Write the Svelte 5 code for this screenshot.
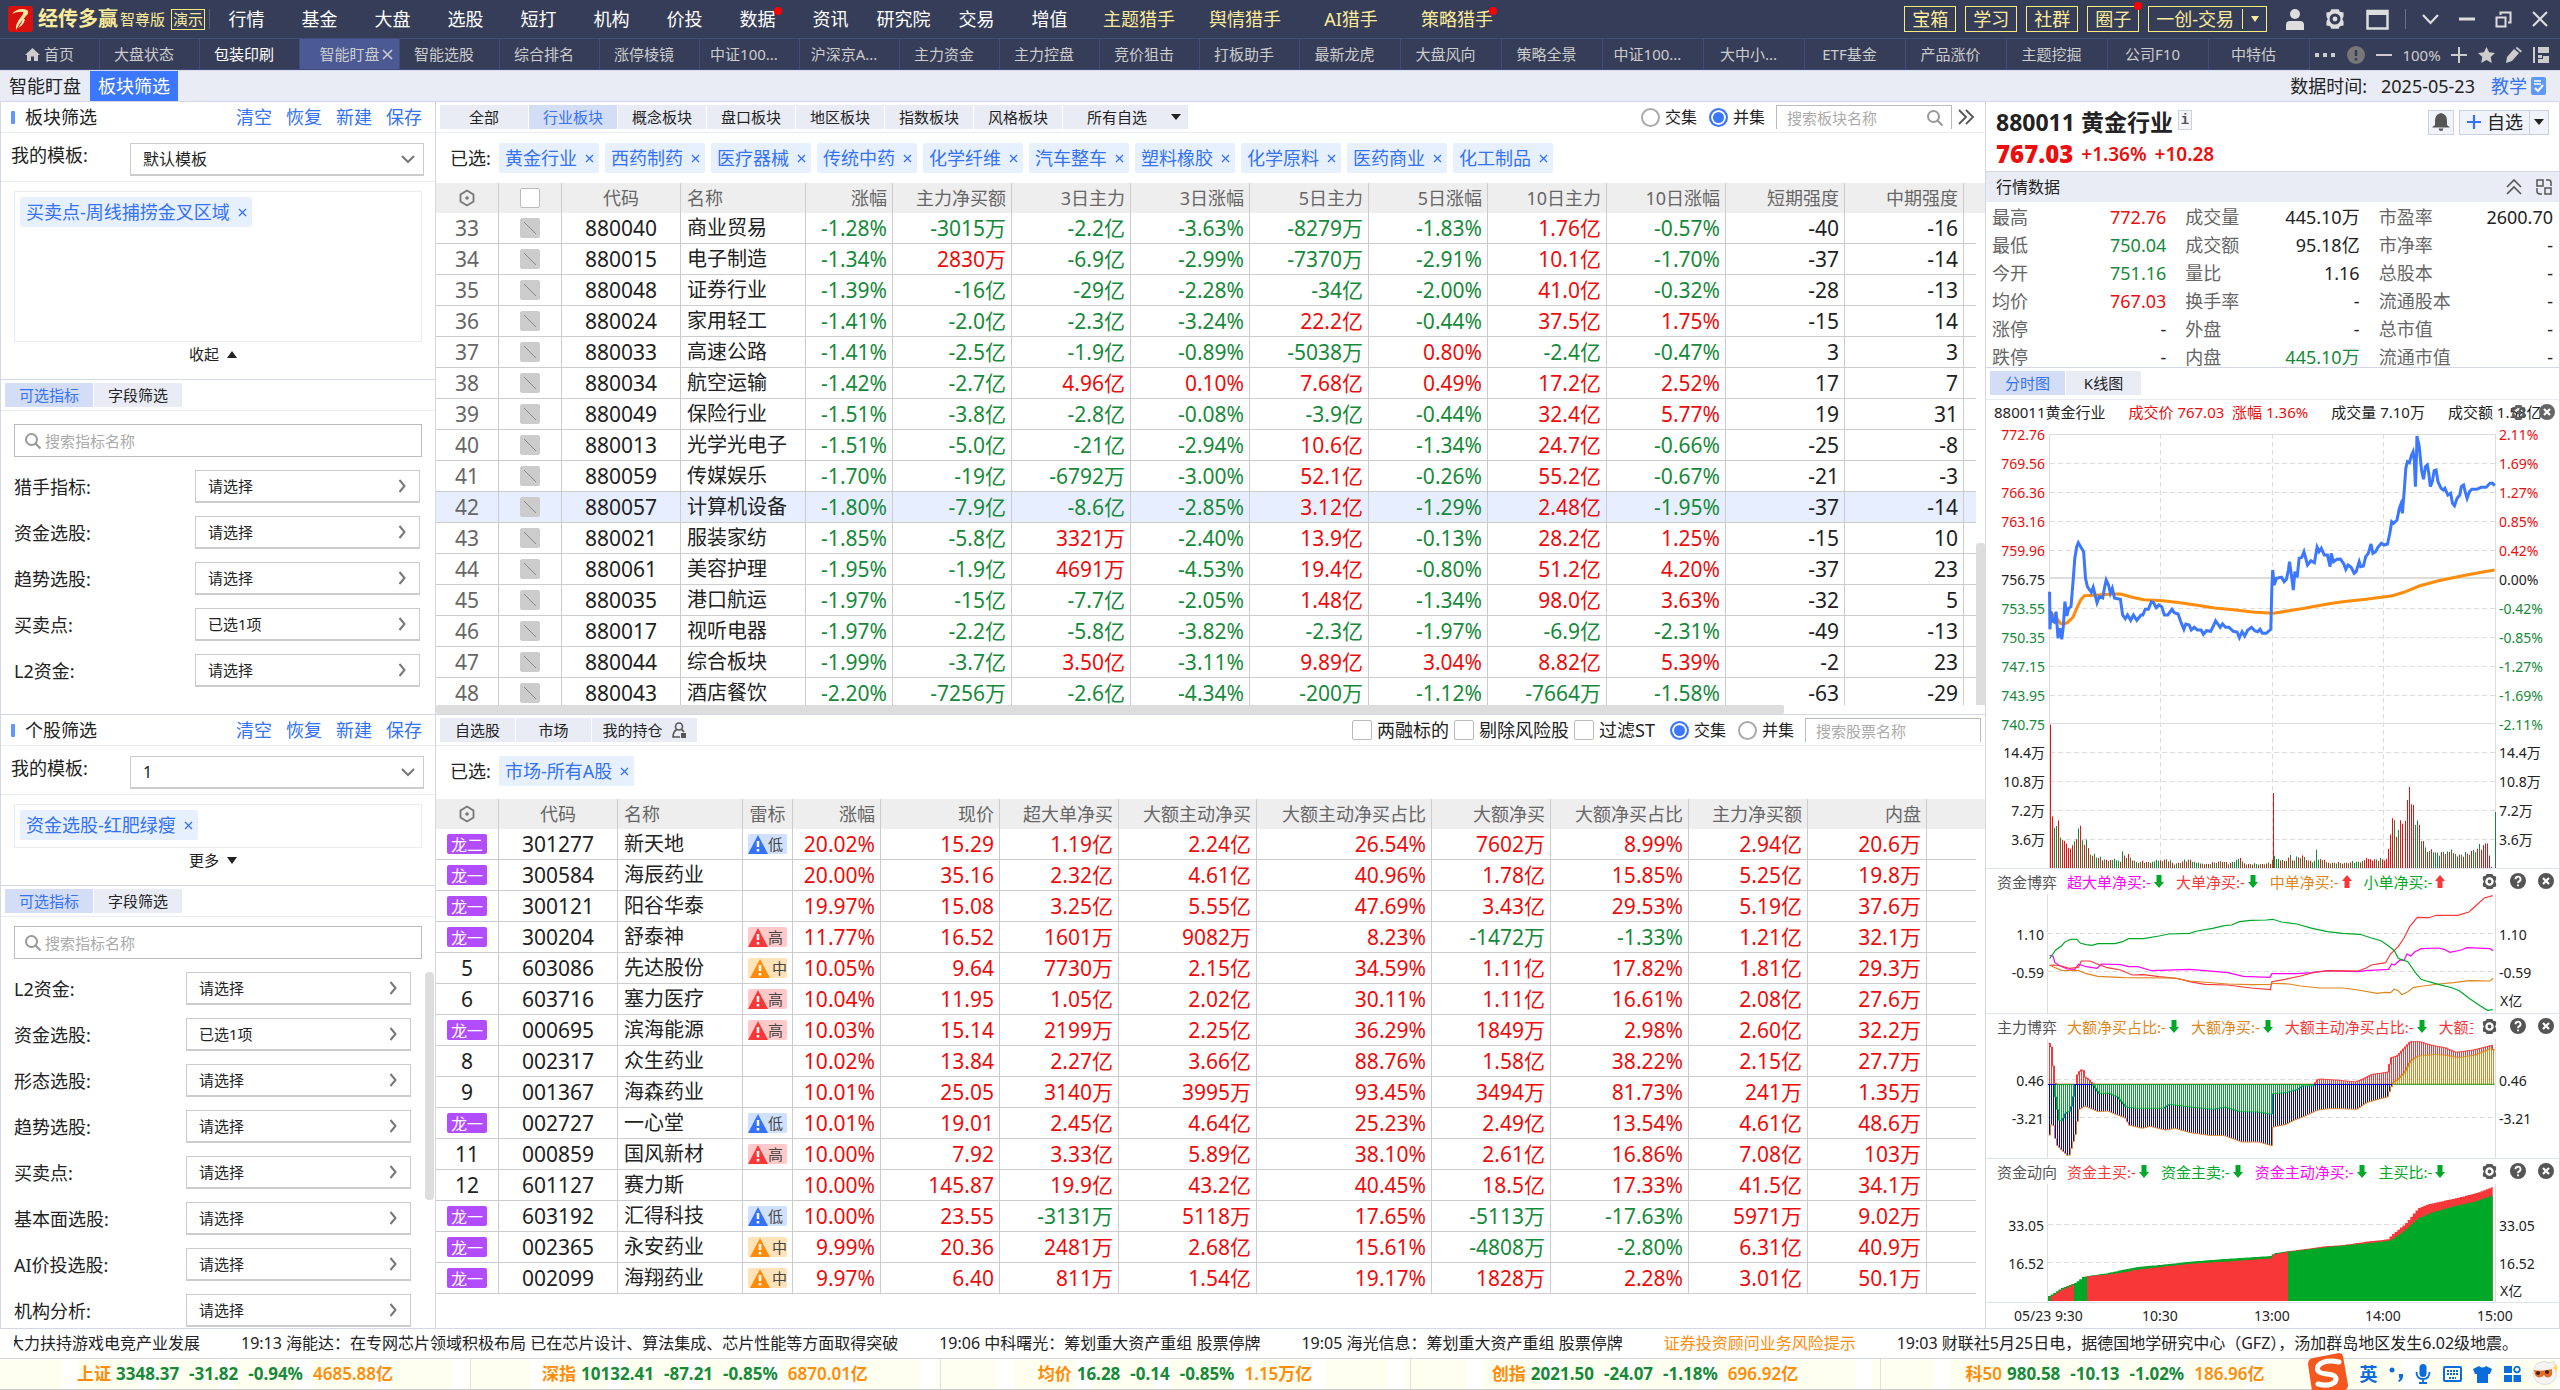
<script>
  const nav = ['行情', '基金', '大盘', '选股', '短打', '机构', '价投', '数据', '资讯', '研究院', '交易', '增值'];
  const hunters = ['主题猎手', '舆情猎手', 'AI猎手', '策略猎手'];
  const boxes = ['宝箱', '学习', '社群', '圈子'];
  const pages = ['首页', '大盘状态', '包装印刷', '智能盯盘', '智能选股', '综合排名', '涨停棱镜', '中证100...', '沪深京A...', '主力资金', '主力控盘', '竞价狙击', '打板助手', '最新龙虎', '大盘风向', '策略全景', '中证100...', '大中小...', 'ETF基金', '产品涨价', '主题挖掘', '公司F10', '中特估'];
  const actions = ['清空', '恢复', '新建', '保存'];
  const sectorTabs = ['全部', '行业板块', '概念板块', '盘口板块', '地区板块', '指数板块', '风格板块'];
  const chosen = ['黄金行业', '西药制药', '医疗器械', '传统中药', '化学纤维', '汽车整车', '塑料橡胶', '化学原料', '医药商业', '化工制品'];
  const filtersA = [['猎手指标:', '请选择'], ['资金选股:', '请选择'], ['趋势选股:', '请选择'], ['买卖点:', '已选1项'], ['L2资金:', '请选择']];
  const filtersB = [['L2资金:', '请选择'], ['资金选股:', '已选1项'], ['形态选股:', '请选择'], ['趋势选股:', '请选择'], ['买卖点:', '请选择'], ['基本面选股:', '请选择'], ['AI价投选股:', '请选择'], ['机构分析:', '请选择']];

  const sectorHead = ['涨幅', '主力净买额', '3日主力', '3日涨幅', '5日主力', '5日涨幅', '10日主力', '10日涨幅', '短期强度', '中期强度'];
  const sectors = `33 880040 商业贸易 -1.28% -3015万 -2.2亿 -3.63% -8279万 -1.83% 1.76亿 -0.57% -40 -16
34 880015 电子制造 -1.34% 2830万 -6.9亿 -2.99% -7370万 -2.91% 10.1亿 -1.70% -37 -14
35 880048 证券行业 -1.39% -16亿 -29亿 -2.28% -34亿 -2.00% 41.0亿 -0.32% -28 -13
36 880024 家用轻工 -1.41% -2.0亿 -2.3亿 -3.24% 22.2亿 -0.44% 37.5亿 1.75% -15 14
37 880033 高速公路 -1.41% -2.5亿 -1.9亿 -0.89% -5038万 0.80% -2.4亿 -0.47% 3 3
38 880034 航空运输 -1.42% -2.7亿 4.96亿 0.10% 7.68亿 0.49% 17.2亿 2.52% 17 7
39 880049 保险行业 -1.51% -3.8亿 -2.8亿 -0.08% -3.9亿 -0.44% 32.4亿 5.77% 19 31
40 880013 光学光电子 -1.51% -5.0亿 -21亿 -2.94% 10.6亿 -1.34% 24.7亿 -0.66% -25 -8
41 880059 传媒娱乐 -1.70% -19亿 -6792万 -3.00% 52.1亿 -0.26% 55.2亿 -0.67% -21 -3
42 880057 计算机设备 -1.80% -7.9亿 -8.6亿 -2.85% 3.12亿 -1.29% 2.48亿 -1.95% -37 -14
43 880021 服装家纺 -1.85% -5.8亿 3321万 -2.40% 13.9亿 -0.13% 28.2亿 1.25% -15 10
44 880061 美容护理 -1.95% -1.9亿 4691万 -4.53% 19.4亿 -0.80% 51.2亿 4.20% -37 23
45 880035 港口航运 -1.97% -15亿 -7.7亿 -2.05% 1.48亿 -1.34% 98.0亿 3.63% -32 5
46 880017 视听电器 -1.97% -2.2亿 -5.8亿 -3.82% -2.3亿 -1.97% -6.9亿 -2.31% -49 -13
47 880044 综合板块 -1.99% -3.7亿 3.50亿 -3.11% 9.89亿 3.04% 8.82亿 5.39% -2 23
48 880043 酒店餐饮 -2.20% -7256万 -2.6亿 -4.34% -200万 -1.12% -7664万 -1.58% -63 -29`.split('\n').map((r) => r.split(' '));

  const stockHead = ['涨幅', '现价', '超大单净买', '大额主动净买', '大额主动净买占比', '大额净买', '大额净买占比', '主力净买额', '内盘'];
  const stocks = `龙二 301277 新天地 低 20.02% 15.29 1.19亿 2.24亿 26.54% 7602万 8.99% 2.94亿 20.6万
龙一 300584 海辰药业 . 20.00% 35.16 2.32亿 4.61亿 40.96% 1.78亿 15.85% 5.25亿 19.8万
龙一 300121 阳谷华泰 . 19.97% 15.08 3.25亿 5.55亿 47.69% 3.43亿 29.53% 5.19亿 37.6万
龙一 300204 舒泰神 高 11.77% 16.52 1601万 9082万 8.23% -1472万 -1.33% 1.21亿 32.1万
5 603086 先达股份 中 10.05% 9.64 7730万 2.15亿 34.59% 1.11亿 17.82% 1.81亿 29.3万
6 603716 塞力医疗 高 10.04% 11.95 1.05亿 2.02亿 30.11% 1.11亿 16.61% 2.08亿 27.6万
龙一 000695 滨海能源 高 10.03% 15.14 2199万 2.25亿 36.29% 1849万 2.98% 2.60亿 32.2万
8 002317 众生药业 . 10.02% 13.84 2.27亿 3.66亿 88.76% 1.58亿 38.22% 2.15亿 27.7万
9 001367 海森药业 . 10.01% 25.05 3140万 3995万 93.45% 3494万 81.73% 241万 1.35万
龙一 002727 一心堂 低 10.01% 19.01 2.45亿 4.64亿 25.23% 2.49亿 13.54% 4.61亿 48.6万
11 000859 国风新材 高 10.00% 7.92 3.33亿 5.89亿 38.10% 2.61亿 16.86% 7.08亿 103万
12 601127 赛力斯 . 10.00% 145.87 19.9亿 43.2亿 40.45% 18.5亿 17.33% 41.5亿 34.1万
龙一 603192 汇得科技 低 10.00% 23.55 -3131万 5118万 17.65% -5113万 -17.63% 5971万 9.02万
龙一 002365 永安药业 中 9.99% 20.36 2481万 2.68亿 15.61% -4808万 -2.80% 6.31亿 40.9万
龙一 002099 海翔药业 中 9.97% 6.40 811万 1.54亿 19.17% 1828万 2.28% 3.01亿 50.1万`.split('\n').map((r) => r.split(' '));
  const riskClass = { 低: 'low', 中: 'mid', 高: 'high' };
  const tone = (v) => (v.startsWith('-') ? 'down' : 'up');

  const quote = [
    ['最高', '772.76', 'up'], ['成交量', '445.10万', ''], ['市盈率', '2600.70', ''],
    ['最低', '750.04', 'down'], ['成交额', '95.18亿', ''], ['市净率', '-', ''],
    ['今开', '751.16', 'down'], ['量比', '1.16', ''], ['总股本', '-', ''],
    ['均价', '767.03', 'up'], ['换手率', '-', ''], ['流通股本', '-', ''],
    ['涨停', '-', ''], ['外盘', '-', ''], ['总市值', '-', ''],
    ['跌停', '-', ''], ['内盘', '445.10万', 'down'], ['流通市值', '-', '']
  ];

  const priceAxis = ['772.76', '769.56', '766.36', '763.16', '759.96', '756.75', '753.55', '750.35', '747.15', '743.95', '740.75'];
  const pctAxis = ['2.11%', '1.69%', '1.27%', '0.85%', '0.42%', '0.00%', '-0.42%', '-0.85%', '-1.27%', '-1.69%', '-2.11%'];
  const volAxis = ['14.4万', '10.8万', '7.2万', '3.6万'];
  const axisTone = (i) => (i < 5 ? 'up' : i > 5 ? 'down' : '');

  // Series are stored as "x,y" on a fine drawing grid; project() turns them into chart pixels.
  const parse = (s) => s.split(' ').map((p) => p.split(',').map(Number));
  const gx = (x) => x / 2.613 - 26;
  const project = (s, top) => parse(s).map(([x, y]) => `${gx(x).toFixed(1)},${(y / 3 - top).toFixed(1)}`).join(' ');
  function at(points, x) {
    if (x <= points[0][0]) return points[0][1];
    for (let i = 1; i < points.length; i++) {
      const [x0, y0] = points[i - 1];
      const [x1, y1] = points[i];
      if (x <= x1) return y0 + ((y1 - y0) * (x - x0)) / (x1 - x0 || 1);
    }
    return points[points.length - 1][1];
  }

  const price = '234,755 235,868 238,815 241,842 246,846 251,815 256,895 261,865 266,898 270,860 274,785 279,828 284,805 290,800 296,715 300,655 305,620 309,608 316,622 323,635 328,715 333,740 343,757 348,742 358,788 364,770 373,774 378,740 382,720 388,735 393,760 398,745 404,775 419,778 425,825 432,836 438,825 446,841 453,825 462,841 473,825 478,825 484,808 492,808 500,785 506,788 513,803 520,795 527,800 534,825 543,825 554,808 560,818 570,822 577,845 585,868 590,852 599,855 604,870 612,862 620,870 630,870 636,883 644,872 655,874 662,858 668,842 680,862 686,852 694,862 703,862 714,874 724,876 730,893 737,875 744,888 752,870 762,862 770,872 778,875 784,868 790,880 800,880 812,868 815,740 817,690 821,735 827,715 840,712 847,725 853,718 858,690 861,665 866,705 871,750 875,695 881,712 886,655 893,652 899,635 908,675 917,662 926,668 933,622 938,635 944,625 952,645 960,645 967,680 970,640 976,665 985,658 994,657 1003,672 1008,688 1014,675 1022,682 1030,700 1035,695 1043,665 1047,680 1054,678 1060,650 1067,640 1074,612 1079,640 1086,635 1092,622 1101,610 1108,615 1117,612 1123,580 1128,545 1133,550 1142,540 1148,505 1152,492 1156,520 1161,450 1165,385 1169,365 1174,368 1180,345 1184,335 1187,360 1190,440 1193,340 1194,288 1200,318 1206,390 1211,418 1216,380 1221,375 1225,400 1229,440 1234,425 1239,392 1244,390 1249,425 1257,445 1263,450 1267,445 1275,465 1282,460 1287,490 1292,497 1299,475 1306,465 1310,440 1316,435 1320,455 1325,475 1331,455 1337,448 1350,448 1362,442 1375,442 1385,430 1392,430 1397,437';
  const average = '234,810 240,822 250,830 262,850 270,853 280,848 295,832 305,805 315,780 325,767 360,765 400,762 420,762 450,772 480,779 530,782 575,788 620,796 665,804 720,810 770,817 820,820 860,812 900,805 960,792 1000,785 1060,778 1130,767 1160,757 1200,738 1250,722 1320,706 1370,695 1397,690';
  const volume = parse('241,155 247,140 254,118 260,120 265,88 271,75 276,98 281,60 294,57 300,87 305,86 309,140 315,125 320,78 325,82 335,60 345,36 352,44 360,30 380,25 420,22 424,50 430,36 440,35 460,18 500,18 540,26 560,12 600,26 620,14 650,12 685,22 700,12 730,28 745,12 790,12 814,15 820,38 840,20 855,22 861,50 867,22 895,38 915,18 927,22 931,57 936,30 960,16 1000,15 1050,20 1065,27 1100,25 1115,28 1120,60 1125,120 1130,150 1137,110 1145,110 1155,165 1160,130 1165,168 1169,252 1174,168 1180,212 1186,155 1192,145 1200,125 1206,70 1225,50 1232,60 1245,38 1255,48 1270,50 1300,40 1320,40 1335,52 1355,60 1370,72 1378,92 1383,5 1392,0');
  const bars = [{ x: 236, h: 430, c: 'r' }];
  for (let i = 0; i < 220; i++) {
    const x = 241 + i * 5.23;
    const noise = i % 7 === 3 ? 1.2 : i % 3 === 1 ? 0.85 : 1;
    const rising = (x > 255 && x < 312) || (x > 1055 && x < 1182) || x > 1340;
    bars.push({ x, h: at(volume, x) * noise, c: (i * 7 + (i >> 2)) % 5 < (rising ? 4 : 2) ? 'r' : 'g' });
  }
  bars.push({ x: 817, h: 225, c: 'r' }, { x: 1397, h: 168, c: 'g' });

  const flows = [
    ['#f0f', '234,766 243,768 248,788 262,798 280,807 300,808 310,793 330,800 358,805 370,792 420,794 440,800 465,800 500,812 600,808 640,812 700,818 740,829 810,832 815,821 880,821 920,818 960,812 1040,815 1060,812 1120,808 1128,792 1135,795 1150,780 1160,782 1168,762 1178,768 1188,756 1205,746 1250,744 1265,748 1280,757 1310,750 1325,743 1385,746 1393,752'],
    ['#f83838', '234,796 245,795 265,798 285,805 310,802 317,783 340,783 360,793 385,803 420,810 450,825 480,824 520,830 570,836 600,845 640,853 700,855 760,864 811,869 815,845 850,838 890,828 930,816 970,812 1040,813 1060,805 1075,795 1112,788 1125,762 1145,740 1160,715 1175,680 1195,652 1225,653 1245,646 1300,646 1330,636 1350,615 1370,594 1392,587'],
    ['#e0861a', '234,796 265,811 310,812 330,821 360,829 430,833 560,834 600,843 700,852 760,854 811,853 817,850 860,852 890,858 940,864 1000,864 1040,870 1090,880 1110,877 1125,878 1135,868 1145,872 1155,884 1170,875 1185,862 1210,858 1250,852 1290,848 1330,842 1385,843 1393,835'],
    ['#00a828', '234,776 241,765 250,750 265,738 275,725 290,718 305,718 315,730 330,734 345,736 360,731 405,731 425,725 440,716 480,716 520,708 545,702 600,700 620,693 660,685 690,677 710,675 730,665 760,661 800,660 817,658 840,666 880,672 920,685 960,695 1000,700 1045,703 1075,714 1100,722 1120,738 1135,752 1145,775 1170,785 1190,818 1205,838 1225,845 1250,853 1285,863 1305,872 1330,895 1360,918 1378,931 1392,929']
  ];

  const redTop = parse('232,97 236,97 240,133 243,172 248,220 300,220 302,195 307,190 312,178 320,175 325,198 335,205 342,215 350,220 925,220 930,207 940,204 990,208 1030,213 1050,205 1075,190 1115,184 1125,140 1140,135 1160,110 1175,92 1200,92 1230,103 1265,110 1295,124 1340,117 1388,103 1394,122');
  const greenLow = parse('232,220 246,220 248,265 258,328 265,330 275,305 287,300 295,255 300,220 345,220 362,248 385,246 410,258 432,288 460,292 530,292 545,280 600,288 660,295 690,288 730,302 780,303 812,310 817,248 850,245 880,235 895,224 920,225 930,220 1394,220');
  const blueLow = parse('232,372 240,325 246,370 250,400 262,415 283,437 290,410 300,370 310,295 325,285 345,295 360,302 385,300 410,312 430,320 440,342 475,352 495,346 535,357 560,352 600,365 650,373 690,374 735,393 780,393 813,404 817,348 850,340 870,328 900,315 930,298 960,293 1000,293 1035,295 1060,275 1090,265 1115,258 1128,220 1394,220');
  const goldTop = parse('232,220 1127,220 1130,215 1140,208 1160,185 1175,150 1195,135 1240,130 1270,133 1300,140 1345,132 1385,112 1394,118');
  const py = (y) => y / 3 - 28;
  const duel = [];
  for (let x = 232; x < 1396; x += 5.226) {
    duel.push({ x: Math.round(gx(x)) + 0.5, r: py(at(redTop, x)), g: py(at(greenLow, x)), b: py(at(blueLow, x)), o: py(at(goldTop, x)) });
  }
  const steps = (key) => duel.map((d) => `${d.x - 1},${d[key].toFixed(1)} ${d.x + 1},${d[key].toFixed(1)}`).join(' ');
  const zero = 45.5;

  const outer = parse('230,855 245,845 262,832 300,815 320,797 380,787 430,775 460,768 520,762 600,752 700,743 810,735 817,727 857,720 900,714 950,706 1000,702 1060,692 1115,685 1130,668 1160,640 1195,592 1220,580 1300,560 1350,545 1392,527');
  const inner = parse('230,855 237,855 262,837 298,819 320,797 380,791 430,783 460,776 520,768 600,758 700,751 810,742 817,730 857,722 950,709 1060,697 1115,690 1130,683 1160,658 1195,622 1230,605 1290,585 1340,573 1392,552');
  function area(points, from, to) {
    let out = `${gx(from).toFixed(1)},117`;
    for (let x = from; x < to; x += 6.8) {
      const y = (at(points, x) / 3 - 173).toFixed(1);
      out += ` ${gx(x).toFixed(1)},${y} ${gx(Math.min(x + 6.8, to)).toFixed(1)},${y}`;
    }
    return out + ` ${gx(to).toFixed(1)},117`;
  }

  const news = [
    ['大力扶持游戏电竞产业发展', 'clip'],
    ['19:13 海能达：在专网芯片领域积极布局 已在芯片设计、算法集成、芯片性能等方面取得突破', ''],
    ['19:06 中科曙光：筹划重大资产重组 股票停牌', ''],
    ['19:05 海光信息：筹划重大资产重组 股票停牌', ''],
    ['证券投资顾问业务风险提示', 'warn'],
    ['19:03 财联社5月25日电，据德国地学研究中心（GFZ），汤加群岛地区发生6.02级地震。', '']
  ];
  const indices = [
    ['上证', '3348.37', '-31.82', '-0.94%', '4685.88亿'],
    ['深指', '10132.41', '-87.21', '-0.85%', '6870.01亿'],
    ['均价', '16.28', '-0.14', '-0.85%', '1.15万亿'],
    ['创指', '2021.50', '-24.07', '-1.18%', '696.92亿'],
    ['科50', '980.58', '-10.13', '-1.02%', '186.96亿']
  ];
  const legendFlow = [['超大单净买:-', 'magenta', 0], ['大单净买:-', 'red', 0], ['中单净买:-', 'gold', 1], ['小单净买:-', 'green', 1]];
  const legendDuel = [['大额净买占比:-', 'gold', 0], ['大额净买:-', 'gold', 0], ['大额主动净买占比:-', 'red', 0], ['大额主动净买:-', 'red', 0]];
  const legendTrend = [['资金主买:-', 'red', 0], ['资金主卖:-', 'green', 0], ['资金主动净买:-', 'magenta', 0], ['主买比:-', 'green', 0]];
</script>

{#snippet gear(size)}
  <svg width={size} height={size} viewBox="0 0 18 18"><path fill="currentColor" fill-rule="evenodd" d="M6 1h6l1 2 3 .6V7l-1 2 1 2v3.400L13 15l-1 2H6l-1-2-3-.6V11l1-2-1-2V3.600L5 3zM9 4.500a4.500 4.500 0 1 0 0 9 4.500 4.500 0 0 0 0-9zM9 7a2 2 0 1 1 0 4 2 2 0 0 1 0-4z" /></svg>
{/snippet}

{#snippet hexNut()}
  <svg width="18" height="18" viewBox="0 0 18 18"><path d="M9 1.500l6.500 4v7L9 16.500l-6.500-4v-7z" fill="none" stroke="#777" stroke-width="1.800" /><circle cx="9" cy="9" r="1.800" fill="#777" /></svg>
{/snippet}

{#snippet lens()}
  <svg class="lens" width="18" height="18" viewBox="0 0 18 18"><circle cx="7.500" cy="7.500" r="5.500" fill="none" stroke="#999" stroke-width="2" /><path d="M11.500 11.500L16.500 16.500" stroke="#999" stroke-width="2.200" /></svg>
{/snippet}

{#snippet sectionHead(title)}
  <header class="sec-head">
    <i class="bar"></i>
    <h2>{title}</h2>
    <div class="acts">{#each actions as a}<button>{a}</button>{/each}</div>
  </header>
{/snippet}

{#snippet template(id, value)}
  <div class="tpl">
    <label for={id}>我的模板:</label>
    <div class="drop">
      <select {id}><option>{value}</option></select>
      <svg width="14" height="9" viewBox="0 0 14 9"><path d="M1 1l6 6 6-6" fill="none" stroke="#777" stroke-width="2" /></svg>
    </div>
  </div>
{/snippet}

{#snippet pickTabs()}
  <div class="pick-tabs"><button class="on">可选指标</button><button>字段筛选</button></div>
{/snippet}

{#snippet filterRows(prefix, rows)}
  {#each rows as [name, value], i}
    <div class="filter">
      <label for={prefix + i}>{name}</label>
      <button id={prefix + i}><span>{value}</span><svg width="9" height="14" viewBox="0 0 9 14"><path d="M1.500 1l5 6-5 6" fill="none" stroke="#777" stroke-width="2" /></svg></button>
    </div>
  {/each}
{/snippet}

{#snippet tag(text)}
  <span class="tag">{text}<button aria-label="移除"><svg width="9" height="9" viewBox="0 0 9 9"><path d="M1 1l7 7M8 1L1 8" stroke="currentColor" stroke-width="1.300" /></svg></button></span>
{/snippet}

{#snippet legend(title, items)}
  <div class="legend">
    <span class="name">{title}</span>
    <div class="items">
      {#each items as [text, color, up]}
        <span class={color}>{text}<svg width="10" height="13" viewBox="0 0 10 13">
          {#if up}<path fill="#f83838" d="M5 0l5 6H7.500v7h-5V6H0z" />{:else}<path fill="#00a828" d="M5 13l5-6H7.500V0h-5v7H0z" />{/if}
        </svg></span>
      {/each}
    </div>
    <div class="tools">
      {@render gear(17)}
      <svg width="16" height="16" viewBox="0 0 16 16"><circle cx="8" cy="8" r="8" fill="currentColor" /><path d="M5.500 6.200a2.500 2.500 0 1 1 3.600 2.200Q8 9 8 10.200M8 11.500v1.800" fill="none" stroke="#fff" stroke-width="1.900" /></svg>
      <svg width="16" height="16" viewBox="0 0 16 16"><circle cx="8" cy="8" r="8" fill="currentColor" /><path d="M5 5l6 6M11 5l-6 6" stroke="#fff" stroke-width="2.200" /></svg>
    </div>
  </div>
{/snippet}

<div class="app">
  <header class="top">
    <div class="brand">
      <svg width="25" height="26" viewBox="0 0 25 26"><rect width="25" height="26" rx="3" fill="#d8100e" /><path d="M4 8Q10 1 19 4Q22 6 18 10Q12 16 8 24Q7 18 13 11Q16 7 15 6Q10 5 4 8z" fill="#ffe9a0" /><path d="M10 22Q14 17 15 13L17 13Q16 19 10 22z" fill="#fff3c0" /></svg>
      <strong>经传多赢</strong><span>智尊版</span><em>演示</em>
    </div>
    <nav class="main-nav">
      {#each nav as n}<a href="#top">{n}{#if n === '数据'}<i class="dot"></i>{/if}</a>{/each}
      {#each hunters as h}<a class="gold" href="#top">{h}{#if h === '策略猎手'}<i class="dot"></i>{/if}</a>{/each}
    </nav>
    <div class="entry">
      {#each boxes as b}<button>{b}{#if b === '圈子'}<i class="dot"></i>{/if}</button>{/each}
      <button class="trade"><span>一创-交易</span><svg width="8" height="6" viewBox="0 0 8 6"><path d="M0 0h8L4 6z" fill="currentColor" /></svg></button>
    </div>
    <div class="win">
      <svg width="18" height="21" viewBox="0 0 18 21"><circle cx="9" cy="5" r="5" fill="currentColor" /><path d="M0 21v-5q0-4 4-4h10q4 0 4 4v5z" fill="currentColor" /></svg>
      {@render gear(22)}
      <svg width="23" height="21" viewBox="0 0 23 21"><path d="M1.500 2h20v17.500h-20z" fill="none" stroke="currentColor" stroke-width="2.500" /><path d="M1 1h21v5H1z" fill="currentColor" /></svg>
      <i class="sep"></i>
      <svg width="17" height="11" viewBox="0 0 17 11"><path d="M1 1l7.500 8L16 1" fill="none" stroke="currentColor" stroke-width="2.200" /></svg>
      <svg width="16" height="4" viewBox="0 0 16 4"><path d="M0 2h16" stroke="currentColor" stroke-width="3" /></svg>
      <svg width="17" height="17" viewBox="0 0 17 17"><path d="M1.500 6.500h9v9h-9zM5.500 4V1.500h10v10H13" fill="none" stroke="currentColor" stroke-width="2" /></svg>
      <svg width="16" height="16" viewBox="0 0 16 16"><path d="M1 1l14 14M15 1L1 15" stroke="currentColor" stroke-width="2.200" /></svg>
    </div>
  </header>

  <nav class="pages">
    {#each pages as p, i}
      <a href="#page" class:home={i === 0} class:lit={i === 2} class:active={i === 3} class:wide={i > 12}>
        {#if i === 0}<svg width="15" height="13" viewBox="0 0 15 13"><path d="M7.500 0L15 7h-2v6H9V8.500H6V13H2V7H0z" fill="currentColor" /></svg>{/if}
        {p}
        {#if i === 3}<svg class="x" width="11" height="11" viewBox="0 0 11 11"><path d="M1 1l9 9M10 1l-9 9" stroke="currentColor" stroke-width="1.600" /></svg>{/if}
      </a>
    {/each}
    <div class="zoom">
      <svg width="22" height="6" viewBox="0 0 22 6"><path d="M1 1h4v4H1zM9 1h4v4H9zM17 1h4v4h-4z" fill="currentColor" /></svg>
      <svg width="18" height="18" viewBox="0 0 18 18"><circle cx="9" cy="9" r="9" fill="#777" /><path d="M9 4v6M9 12v2.500" stroke="#363d58" stroke-width="2.500" /></svg>
      <svg width="16" height="4" viewBox="0 0 16 4"><path d="M0 2h16" stroke="currentColor" stroke-width="2" /></svg>
      <span>100%</span>
      <svg width="16" height="16" viewBox="0 0 16 16"><path d="M0 8h16M8 0v16" stroke="currentColor" stroke-width="2" /></svg>
      <svg width="17" height="16" viewBox="0 0 17 16"><path d="M8.500 0l2.600 5.300 5.900.8-4.300 4 1.100 5.900-5.300-2.900L3.200 16l1.100-5.900L0 6.100l5.900-.8z" fill="currentColor" /></svg>
      <svg width="16" height="16" viewBox="0 0 16 16"><path d="M0 16l1-6 7-8 5 4-7 8zM9.500 1L11 0l5 4-1.500 1.500z" fill="currentColor" /></svg>
      <svg width="16" height="16" viewBox="0 0 16 16"><path d="M0 0h2v16H0zM5 0h11v6H5zM5 8h4v3H5zM5 12h11v4H5zM10 9h6v7h-6z" fill="currentColor" /></svg>
    </div>
  </nav>

  <div class="sub">
    <a href="#watch">智能盯盘</a><a class="on" href="#sector">板块筛选</a>
    <div class="stamp"><span>数据时间:</span><span class="date">2025-05-23</span><a href="#learn">教学<svg width="15" height="18" viewBox="0 0 15 18"><rect width="15" height="18" rx="2" fill="#5f98ff" /><path d="M3 4h7M3 7h7" stroke="#fff" stroke-width="1.500" /><path d="M4 11l3 3 5-6" fill="none" stroke="#fff" stroke-width="2" /></svg></a></div>
  </div>

  <main>
    <aside class="left">
      <section>
        {@render sectionHead('板块筛选')}
        {@render template('tplA', '默认模板')}
        <div class="picked tall">{@render tag('买卖点-周线捕捞金叉区域')}</div>
        <button class="fold">收起<svg width="10" height="7" viewBox="0 0 10 7"><path d="M5 0l5 7H0z" fill="#222" /></svg></button>
        {@render pickTabs()}
        <div class="find">{@render lens()}<input type="search" aria-label="搜索指标名称" placeholder="搜索指标名称" /></div>
        <div class="list">{@render filterRows('fa', filtersA)}</div>
      </section>
      <section>
        {@render sectionHead('个股筛选')}
        {@render template('tplB', '1')}
        <div class="picked">{@render tag('资金选股-红肥绿瘦')}</div>
        <button class="fold">更多<svg width="10" height="7" viewBox="0 0 10 7"><path d="M5 7l5-7H0z" fill="#222" /></svg></button>
        {@render pickTabs()}
        <div class="find tight">{@render lens()}<input type="search" aria-label="搜索个股指标名称" placeholder="搜索指标名称" /></div>
        <div class="scroll"><div class="list">{@render filterRows('fb', filtersB)}</div><i class="thumb"></i></div>
      </section>
    </aside>

    <div class="center">
      <section class="pane">
        <div class="toolbar">
          <div class="tabs">
            {#each sectorTabs as t, i}<button class:on={i === 1}>{t}</button>{/each}
            <button class="more">所有自选<svg width="10" height="6" viewBox="0 0 10 6"><path d="M0 0h10L5 6z" fill="#222" /></svg></button>
          </div>
          <div class="opts">
            <label class="radio"><input type="radio" name="a" />交集</label>
            <label class="radio"><input type="radio" name="a" checked />并集</label>
          </div>
          <div class="query"><input type="search" aria-label="搜索板块名称" placeholder="搜索板块名称" />{@render lens()}</div>
          <svg class="chev" width="17" height="16" viewBox="0 0 17 16"><path d="M1 1l7 7-7 7M8 1l7 7-7 7" fill="none" stroke="#555" stroke-width="1.800" /></svg>
        </div>
        <div class="tags"><span>已选:</span>{#each chosen as c}{@render tag(c)}{/each}</div>
        <div class="grid-wrap">
          <table class="sectors">
            <colgroup><col class="w63" /><col class="w63" /><col class="w119" /><col class="w125" /><col class="w87" />{#each Array(9) as _}<col class="w119" />{/each}<col /></colgroup>
            <thead><tr><th class="mid">{@render hexNut()}</th><th class="mid"><input class="box" type="checkbox" aria-label="全选" /></th><th class="mid">代码</th><th class="name">名称</th>{#each sectorHead as h}<th>{h}</th>{/each}<th></th></tr></thead>
            <tbody>
              {#each sectors as r}
                <tr class:hot={r[0] === '42'}>
                  <td class="mid no">{r[0]}</td>
                  <td class="mid"><input class="mute" type="checkbox" disabled aria-label={r[2]} /></td>
                  <td class="mid">{r[1]}</td><td class="name">{r[2]}</td>
                  {#each r.slice(3) as v, i}<td class={i < 8 ? tone(v) : ''}>{v}</td>{/each}
                  <td></td>
                </tr>
              {/each}
            </tbody>
          </table>
          <div class="gutter"><i></i></div>
        </div>
        <div class="hbar"><i></i></div>
      </section>

      <section class="pane">
        <div class="toolbar">
          <div class="tabs small">
            <button>自选股</button><button>市场</button>
            <button class="hold">我的持仓<svg width="16" height="16" viewBox="0 0 16 16"><circle cx="8" cy="4.500" r="3.500" fill="none" stroke="#555" stroke-width="1.600" /><path d="M5.500 7.500Q2 10 2 15h7M10.500 7.500Q12 8.500 13 10" fill="none" stroke="#555" stroke-width="1.600" /><path d="M10 11h5v5h-5z" fill="#555" /></svg></button>
          </div>
          <div class="opts checks">
            <label><input class="box" type="checkbox" />两融标的</label>
            <label><input class="box" type="checkbox" />剔除风险股</label>
            <label><input class="box" type="checkbox" />过滤ST</label>
          </div>
          <div class="opts">
            <label class="radio"><input type="radio" name="b" checked />交集</label>
            <label class="radio"><input type="radio" name="b" />并集</label>
          </div>
          <div class="query edge"><input type="search" aria-label="搜索股票名称" placeholder="搜索股票名称" /></div>
        </div>
        <div class="tags roomy"><span>已选:</span>{@render tag('市场-所有A股')}</div>
        <div class="grid-wrap">
          <table>
            <colgroup><col class="w63" /><col class="w119" /><col class="w125" /><col class="w50" /><col class="w88" /><col class="w119" /><col class="w119" /><col class="w138" /><col class="w175" /><col class="w119" /><col class="w138" /><col class="w119" /><col class="w119" /><col /></colgroup>
            <thead><tr><th class="mid">{@render hexNut()}</th><th class="mid">代码</th><th class="name">名称</th><th class="mid">雷标</th>{#each stockHead as h}<th>{h}</th>{/each}<th></th></tr></thead>
            <tbody>
              {#each stocks as r}
                <tr>
                  <td class="mid">{#if r[0][0] === '龙'}<span class="dragon">{r[0]}</span>{:else}{r[0]}{/if}</td>
                  <td class="mid">{r[1]}</td><td class="name">{r[2]}</td>
                  <td class="mid">{#if riskClass[r[3]]}<span class="risk {riskClass[r[3]]}"><svg width="20" height="19" viewBox="0 0 20 19"><path d="M10 0l10 19H0z" fill="currentColor" /><path d="M10 6v6M10 14v2.500" stroke="#fff" stroke-width="2.500" /></svg><b>{r[3]}</b></span>{/if}</td>
                  {#each r.slice(4) as v}<td class={tone(v)}>{v}</td>{/each}
                  <td></td>
                </tr>
              {/each}
            </tbody>
          </table>
          <div class="gutter"></div>
        </div>
      </section>
    </div>

    <aside class="right">
      <div class="title">
        <div class="line1">
          <h1>880011 黄金行业</h1><span class="info">i</span>
          <button class="bell" aria-label="提醒"><svg width="18" height="18" viewBox="0 0 18 18"><path d="M9 0q6 1 6 8v4l3 2.500H0L3 12V8q0-7 6-8zM6.500 15.500h5Q11 18 9 18t-2.500-2.500z" fill="#555" /></svg></button>
          <div class="fav"><button><svg width="16" height="16" viewBox="0 0 16 16"><path d="M8 1v14M1 8h14" stroke="#3572f6" stroke-width="2.200" /></svg>自选</button><button aria-label="更多分组"><svg width="10" height="6" viewBox="0 0 10 6"><path d="M0 0h10L5 6z" fill="#222" /></svg></button></div>
        </div>
        <p class="up"><b>767.03</b><span>+1.36%</span><span>+10.28</span></p>
      </div>
      <div class="quote-head"><span>行情数据</span>
        <svg width="16" height="16" viewBox="0 0 16 16"><path d="M1 8l7-7 7 7M1 15l7-7 7 7" fill="none" stroke="#555" stroke-width="1.600" /></svg>
        <svg width="16" height="16" viewBox="0 0 16 16"><path d="M1 1h6v6H1zM9 9h6v6H9zM10 1h3q2 0 2 3v3M1 9v3q0 3 3 3h2" fill="none" stroke="#555" stroke-width="1.500" /></svg>
      </div>
      <dl class="quote">{#each quote as [k, v, c]}<div><dt>{k}</dt><dd class={c}>{v}</dd></div>{/each}</dl>
      <div class="chart-tabs"><button class="on">分时图</button><button>K线图</button></div>
      <div class="caption">
        <span>880011黄金行业</span><span class="up">成交价 767.03&nbsp; 涨幅 1.36%</span><span>成交量 7.10万</span><span>成交额 1.58亿</span>
        <div class="over">{@render gear(17)}<svg width="16" height="16" viewBox="0 0 16 16"><circle cx="8" cy="8" r="8" fill="currentColor" /><path d="M5 5l6 6M11 5l-6 6" stroke="#fff" stroke-width="2.200" /></svg></div>
      </div>
      <svg class="plot" height="443" viewBox="0 0 573 443">
        <g class="grid">
          {#each [1, 2, 3, 4, 6, 7, 8, 9, 11, 12, 13, 14] as i}<path d="M64 {Math.round(9 + i * 28.95)}.500H509" />{/each}
          {#each [174, 286, 397] as x}<path d="M{x}.500 9V443" />{/each}
        </g>
        <path class="frame" d="M63.500 443V9.500H509.500V443M64 298.500H509" />
        <path d="M64 153H509" stroke="#ddd" stroke-width="2" />
        {#each priceAxis as p, i}
          <text class={axisTone(i)} x="59" y={Math.round(15 + i * 28.95)} text-anchor="end">{p}</text>
          <text class={axisTone(i)} x="513" y={Math.round(15 + i * 28.95)}>{pctAxis[i]}</text>
        {/each}
        {#each volAxis as v, i}
          <text x="59" y={Math.round(333 + i * 28.95)} text-anchor="end">{v}</text>
          <text x="513" y={Math.round(333 + i * 28.95)}>{v}</text>
        {/each}
        {#each bars as b}<rect x={Math.round(gx(b.x))} y={443 - b.h / 3} width="1" height={b.h / 3} fill={b.c === 'r' ? '#ec1010' : '#168a3a'} />{/each}
        <polyline points={project(average, 85)} fill="none" stroke="#ff8c0a" stroke-width="3" />
        <polyline points={project(price, 85)} fill="none" stroke="#3b77ff" stroke-width="3" />
      </svg>

      <div class="panel">
        {@render legend('资金博弈', legendFlow)}
        <svg class="plot" height="119" viewBox="0 0 573 119">
          <g class="grid"><path d="M62 39.500H509M62 77.500H509" /></g>
          <path class="frame" d="M61.500 0V119M509.500 0V119" />
          {#each flows as [c, s]}<polyline points={project(s, 194)} fill="none" stroke={c} stroke-width="1.200" />{/each}
          <text x="58" y="46" text-anchor="end">1.10</text><text x="513" y="46">1.10</text>
          <text x="58" y="84" text-anchor="end">-0.59</text><text x="513" y="84">-0.59</text><text x="514" y="112">X亿</text>
        </svg>
      </div>
      <div class="panel">
        {@render legend('主力博弈', legendDuel)}
        <svg class="plot" height="119" viewBox="0 0 573 119">
          <g class="grid"><path d="M62 40.500H509M62 78.500H509" /></g>
          <path class="frame" d="M61.500 0V119M509.500 0V119" />
          {#each duel as d}
            {#if d.b > d.g + 0.5}<path d="M{d.x} {d.g}V{d.b}" stroke="#00f" />{/if}
            {#if d.g > zero + 0.5}<path d="M{d.x} {zero}V{d.g}" stroke="#00a828" />{/if}
            {#if d.r < d.o - 0.5}<path d="M{d.x} {d.r}V{d.o}" stroke="#f83838" />{/if}
            {#if d.o < zero - 0.5}<path d="M{d.x} {d.o}V{zero}" stroke="#e0861a" />{/if}
          {/each}
          <polyline points={steps('b')} fill="none" stroke="#e0861a" />
          <polyline points={steps('r')} fill="none" stroke="#f83838" />
          <polyline points={steps('g')} fill="none" stroke="#00a828" />
          <polyline points={steps('o')} fill="none" stroke="#e0861a" />
          <path d="M62 {zero}H406" stroke="#00f" /><path d="M70 {zero}H88M106 {zero}H328" stroke="#00a828" />
          <text x="58" y="47" text-anchor="end">0.46</text><text x="513" y="47">0.46</text>
          <text x="58" y="85" text-anchor="end">-3.21</text><text x="513" y="85">-3.21</text>
        </svg>
      </div>
      <div class="panel">
        {@render legend('资金动向', legendTrend)}
        <svg class="plot" height="119" viewBox="0 0 573 119">
          <g class="grid"><path d="M62 40.500H509M62 78.500H509" /></g>
          <path class="frame" d="M61.500 0V119M509.500 0V119" />
          <polygon points={area(outer, 230, 857)} fill="#00a828" />
          <polygon points={area(inner, 237, 298)} fill="#f83838" />
          <polygon points={area(inner, 332, 857)} fill="#f83838" />
          <polygon points={area(outer, 857, 1392)} fill="#f83838" />
          <polygon points={area(inner, 857, 1392)} fill="#00a828" />
          <text x="58" y="47" text-anchor="end">33.05</text><text x="513" y="47">33.05</text>
          <text x="58" y="85" text-anchor="end">16.52</text><text x="513" y="85">16.52</text><text x="514" y="112">X亿</text>
        </svg>
      </div>
      <svg class="plot" height="24" viewBox="0 0 573 24">
        <text x="28" y="18">05/23 9:30</text>
        <text x="174" y="18" text-anchor="middle">10:30</text><text x="286" y="18" text-anchor="middle">13:00</text>
        <text x="397" y="18" text-anchor="middle">14:00</text><text x="509" y="18" text-anchor="middle">15:00</text>
      </svg>
    </aside>
  </main>

  <div class="ticker">{#each news as [t, c]}<span class={c}>{t}</span>{/each}</div>

  <footer>
    {#each indices as [n, v, d, p, m]}
      <div class="index"><b class="amber">{n}</b><b class="down first">{v}</b><b class="down">{d}</b><b class="down">{p}</b><b class="amber">{m}</b></div>
    {/each}
    <div class="ime">
      <svg width="40" height="42" viewBox="0 0 40 42"><path d="M5 5L31 0Q34 0 35 3L40 32Q40 36 37 37L8 42Q4 42 4 38L0 11Q0 6 5 5z" fill="#f4581f" /><path d="M31 9Q16 6 10 13Q7 20 19 21Q31 22 27 29Q21 34 10 31" fill="none" stroke="#fff" stroke-width="5" stroke-linecap="round" /></svg>
      <b>英</b>
      <svg width="15" height="16" viewBox="0 0 15 16"><circle cx="3" cy="4" r="2.500" fill="#0a6ddb" /><path d="M10 8h4q1 5-4 8l-1-1q2-2 2-3h-1z" fill="#0a6ddb" /></svg>
      <svg width="16" height="20" viewBox="0 0 16 20"><rect x="4.500" width="7" height="13" rx="3.500" fill="#0a6ddb" /><path d="M1.500 8q0 7 6.500 7t6.500-7M8 15v4M4 19h8" fill="none" stroke="#0a6ddb" stroke-width="1.800" /></svg>
      <svg width="19" height="16" viewBox="0 0 19 16"><rect x="1" y="1" width="17" height="14" rx="1" fill="none" stroke="#0a6ddb" stroke-width="2" /><path d="M4 5h11M4 8h11M6 12h7" stroke="#0a6ddb" stroke-width="2" stroke-dasharray="2 1" /></svg>
      <svg width="19" height="17" viewBox="0 0 19 17"><path d="M6 0q3.500 3 7 0l6 3-2 5h-2v9H4V8H2L0 3z" fill="#0a6ddb" /></svg>
      <svg width="17" height="16" viewBox="0 0 17 16"><path d="M0 0h8v7H0zM0 9h8v7H0zM9.500 9h7.500v7H9.500z" fill="#0a6ddb" /><circle cx="13" cy="3.500" r="2.800" fill="none" stroke="#0a6ddb" stroke-width="1.800" /></svg>
      <svg width="26" height="28" viewBox="0 0 26 28"><path d="M3 6l3-3q6-3 12 0l4-2 1 6q3 8-1 14-9 7-18 0Q-1 14 3 6z" fill="#f6f3f3" stroke="#ddd" /><path d="M2 10q8 2 18-1v6q-5 5-8 0-5 5-9 0z" fill="#e8682a" /><circle cx="6" cy="13" r="2" fill="#3a2418" /><circle cx="15" cy="12" r="2" fill="#3a2418" /><path d="M24 3l1 4 1 1-1 1-1 4-1-4-3-1 3-1z" fill="#ffd54a" /></svg>
    </div>
  </footer>
</div>

<style>
  :global(body) { margin: 0; background: #fff; }
  .app, .app button, .app input, .app select { font-family: "Noto Sans", "Noto Sans CJK SC", sans-serif; color: #222; }
  .app { display: flex; flex-direction: column; min-height: 100vh; font-size: 18px; line-height: 24px; overflow: hidden; }
  .app * { box-sizing: border-box; }
  button { border: 0; background: none; padding: 0; font-size: 15px; line-height: 24px; cursor: pointer; white-space: nowrap; }
  a { text-decoration: none; color: inherit; white-space: nowrap; }
  h1, h2, p, dl, dd { margin: 0; }
  svg { display: block; flex: none; }
  .app .up { color: #ec0d0d; }
  .app .down { color: #168a3a; }

  .top { display: flex; align-items: center; height: 39px; background: #363d58; border-bottom: 1px solid #414c7a; color: #fff; }
  .brand { display: flex; align-items: center; width: 210px; height: 20px; padding-left: 8px; flex: none; color: #fbeb9a; border-right: 1px solid #59607c; }
  .app .brand strong { margin-left: 5px; font-size: 20px; }
  .brand span { margin-left: 2px; font-size: 15px; }
  .brand em { margin-left: 6px; padding: 0 1px; border: 1px solid #fbeb7a; font-size: 15px; font-style: normal; line-height: 19px; }
  .main-nav { display: flex; }
  .main-nav a { position: relative; width: 73px; text-align: center; }
  .main-nav .gold { width: 106px; color: #fbeb9a; }
  .dot { position: absolute; top: 0; right: 12px; width: 8px; height: 8px; border-radius: 50%; background: #f00; }
  .gold .dot { right: 13px; }
  .entry { display: flex; gap: 9px; margin-left: auto; }
  .app .entry button { position: relative; height: 26px; padding: 0 7px; border: 1px solid #fbeb7a; color: #fbeb9a; font-size: 18px; }
  .entry .dot { top: -5px; right: -4px; }
  .entry .trade { display: flex; align-items: center; gap: 8px; }
  .trade span { padding-right: 8px; border-right: 1px solid #fbeb7a; line-height: 20px; }
  .win { display: flex; align-items: center; gap: 20px; padding: 0 12px 0 19px; color: #ddd; }
  .win .sep { width: 1px; height: 20px; margin: 0 -4px; background: #6b7187; }

  .pages { display: flex; height: 32px; background: #363d58; border-bottom: 1px solid #d8dcec; color: #ccc; font-size: 15px; }
  .pages a { position: relative; display: flex; align-items: center; justify-content: center; width: 100px; gap: 4px; padding-right: 11px; border-right: 1px solid #414c7a; border-bottom: 1px solid #414c7a; }
  .pages .wide { width: 101px; }
  .pages .home, .pages .active { padding-right: 0; }
  .pages .lit { color: #fff; }
  .pages .active { background: #4b5a95; }
  .pages .x { position: absolute; right: 6px; }
  .zoom { display: flex; flex: 1; align-items: center; justify-content: space-between; padding: 0 11px 0 4px; }

  .sub { display: flex; height: 31px; background: #e9ecf5; border-bottom: 1px solid #d3d7e6; line-height: 31px; }
  .sub > a { padding: 0 9px; }
  .sub > .on { padding: 0 8px; background: #3b77ff; color: #fff; }
  .stamp { display: flex; margin-left: auto; padding-right: 14px; }
  .date { width: 102px; margin: 0 8px 0 14px; overflow: hidden; white-space: nowrap; }
  .stamp a { display: flex; align-items: center; gap: 4px; color: #3572f6; }

  main { display: grid; grid-template-columns: 436px minmax(0, 1fr) 575px; flex: 1; }
  .left, .center { display: grid; grid-template-rows: minmax(0, 1fr) minmax(0, 1fr); height: 1226px; }
  .left { border-left: 1px solid #d3d7e6; border-right: 1px solid #d3d7e6; }
  .left section { display: flex; flex-direction: column; overflow: hidden; border-bottom: 1px solid #d3d7e6; }
  .left section:last-child, .pane:last-child { border-bottom: 0; }
  .sec-head { display: flex; align-items: center; height: 31px; padding: 0 13px 0 10px; border-bottom: 1px solid #e9ecf5; }
  .bar { width: 4px; height: 13px; margin-right: 10px; border-radius: 1px; background: #5f98ff; }
  h2 { font-size: 18px; font-weight: 400; }
  .acts { display: flex; gap: 14px; margin-left: auto; }
  .app .acts button { color: #3572f6; font-size: 18px; }
  .tpl { display: flex; justify-content: space-between; height: 49px; padding: 10px 11px 0 10px; border-bottom: 1px solid #e9ecf5; }
  .drop { position: relative; width: 294px; }
  .drop select { width: 100%; height: 33px; padding: 0 12px; border: 1px solid #ccc; border-bottom-width: 2px; background: #fff; appearance: none; font-size: 16px; }
  .drop svg { position: absolute; right: 9px; top: 12px; }
  .picked { height: 44px; margin: 9px 13px 0; padding: 5px; border: 1px solid #e9ecf5; }
  .picked.tall { height: 151px; }
  .tag { display: inline-flex; align-items: center; gap: 8px; height: 30px; padding: 0 5px 0 6px; border-radius: 2px; background: #e6f0ff; color: #3572f6; white-space: nowrap; }
  .app .tag button { color: #3572f6; }
  .fold { display: flex; align-items: center; justify-content: center; gap: 8px; height: 24px; margin: 0 10px 13px 0; }
  .pick-tabs { display: flex; gap: 1px; height: 32px; flex: none; padding: 3px 4px; border-top: 1px solid #d3d7e6; border-bottom: 1px solid #e9ecf5; }
  .pick-tabs button, .chart-tabs button { width: 88px; height: 24px; background: #e9ecf5; }
  .app .pick-tabs .on, .app .chart-tabs .on, .app .tabs .on { background: #d3ddf5; color: #3572f6; }
  .find { display: flex; align-items: center; gap: 2px; height: 33px; flex: none; margin: 13px 13px 0; padding-left: 9px; border: 1px solid #bbb; }
  .find.tight { margin-top: 9px; }
  .find input { flex: 1; padding: 0 0 0 1px; border: 0; outline: 0; font-size: 15px; }
  input::placeholder { color: #aaa; }
  .list { display: grid; gap: 13px; flex: 1; padding: 13px 15px 0 13px; align-content: start; }
  .scroll { display: flex; flex: 1; min-height: 0; overflow: hidden; }
  .scroll .list { padding-right: 14px; }
  .thumb { width: 9px; height: 228px; margin: 13px 1px 0 0; border-radius: 4px; background: #ddd; }
  .filter { display: flex; align-items: center; justify-content: space-between; }
  .filter button { display: flex; align-items: center; justify-content: space-between; width: 225px; height: 33px; padding: 0 12px; border: 1px solid #ccc; border-bottom-width: 2px; background: #fff; }

  .pane { display: flex; flex-direction: column; overflow: hidden; border-bottom: 1px solid #d3d7e6; }
  .toolbar { display: flex; align-items: center; height: 31px; flex: none; padding-left: 4px; border-bottom: 1px solid #e9ecf5; }
  .tabs { display: flex; gap: 1px; margin-right: auto; }
  .tabs button { width: 88px; height: 24px; background: #e9ecf5; }
  .tabs .more { display: flex; align-items: center; justify-content: flex-end; gap: 24px; width: 125px; padding-right: 7px; }
  .tabs.small button { width: 75px; }
  .tabs.small .hold { display: flex; align-items: center; justify-content: center; gap: 8px; width: 105px; }
  .opts { display: flex; gap: 12px; margin-right: 11px; }
  .opts label { display: flex; align-items: center; gap: 5px; white-space: nowrap; }
  .opts .radio { font-size: 16px; }
  .opts.checks { gap: 5px; margin-right: 15px; }
  input[type="radio"] { width: 19px; height: 19px; margin: 0; appearance: none; border: 2px solid #aaa; border-radius: 50%; background: #fff; }
  input[type="radio"]:checked { border-color: #3b77ff; background: #3b77ff; box-shadow: inset 0 0 0 2px #fff; }
  .box, .mute { display: block; width: 20px; height: 20px; margin: 0 auto; appearance: none; border: 1px solid #bbb; border-radius: 2px; background: #fff; }
  .mute { border-color: #ccc; background: linear-gradient(45deg, transparent 46%, #888 47% 53%, transparent 54%) center / 12px 12px no-repeat #ccc; }
  .query { display: flex; align-items: center; width: 176px; height: 24px; padding: 0 7px 0 10px; border: 1px solid #bbb; border-bottom: 0; }
  .query input { width: 100%; min-width: 0; padding: 0; border: 0; outline: 0; background: none; font-size: 15px; }
  .query.edge { margin-right: 4px; }
  .chev { margin: 0 10px 0 6px; }
  .tags { display: flex; align-items: center; gap: 6px; height: 50px; flex: none; padding-left: 14px; }
  .tags.roomy { height: 53px; padding-bottom: 3px; }
  .tags > span:first-child { width: 43px; }
  .grid-wrap { display: flex; flex: 1; min-height: 0; overflow: hidden; align-items: stretch; }
  table { flex: 1; width: 100%; height: min-content; border-collapse: separate; border-spacing: 0; table-layout: fixed; font-size: 21px; }
  .w50 { width: 50px; } .w63 { width: 63px; } .w87 { width: 87px; } .w88 { width: 88px; } .w119 { width: 119px; }
  .w125 { width: 125px; } .w138 { width: 138px; } .w175 { width: 175px; }
  th { height: 30px; padding: 0 5px; border-right: 1px solid #ccc; background: #eee; color: #666; font-size: 18px; font-weight: 400; text-align: right; white-space: nowrap; }
  td { height: 31px; padding: 0 5px; border-right: 1px solid #ccc; border-bottom: 1px solid #ccc; text-align: right; white-space: nowrap; line-height: 28px; }
  th:last-child, td:last-child { border-right: 0; }
  .mid { padding: 0; text-align: center; }
  .mid > svg { margin: 0 auto; }
  .name { padding-left: 6px; text-align: left; }
  td.name { font-size: 20px; }
  .no { color: #666; }
  .hot td { background: #e6eeff; }
  .gutter { width: 9px; flex: none; padding-top: 360px; background: linear-gradient(#eee 30px, transparent 30px); }
  .gutter i { display: block; height: 162px; border-radius: 3px 3px 0 0; background: #ddd; }
  .hbar { height: 9px; flex: none; }
  .hbar i { display: block; width: 87%; height: 9px; border-radius: 2px; background: #ddd; }
  .dragon { display: block; width: 40px; height: 20px; margin: 0 auto; border-radius: 2px; background: #b14dff; color: #fff; font-size: 16px; line-height: 22px; }
  .risk { display: flex; align-items: center; width: 39px; height: 20px; margin: 0 auto; border-radius: 2px; }
  .risk b { color: #444; font-size: 15px; font-weight: 400; line-height: 20px; }
  .risk.low { background: #d0e0ff; color: #3572f6; }
  .risk.mid { background: #ffe3b8; color: #ff8c0a; }
  .risk.high { background: #ffc9c9; color: #f83838; }

  .right { border-left: 1px solid #d3d7e6; border-right: 1px solid #d3d7e6; overflow: hidden; }
  .title { height: 70px; padding: 5px 10px 0; border-bottom: 1px solid #d3d7e6; }
  .line1 { display: flex; align-items: center; height: 30px; }
  h1 { font-size: 23px; line-height: 30px; }
  .info { width: 14px; height: 20px; margin: 0 auto 4px 5px; border: 1px solid #ccd0e0; background: #f3f4f9; color: #555; font: bold 14px/18px "Liberation Mono", monospace; text-align: center; }
  .bell { display: grid; place-items: center; width: 26px; height: 25px; margin-right: 5px; border: 1px solid #ccd0e0; background: #f1f3fa; }
  .fav { display: flex; height: 25px; border: 1px solid #ccd0e0; background: #f1f3fa; }
  .fav button { display: flex; align-items: center; gap: 5px; padding: 0 6px; font-size: 18px; }
  .fav button + button { border-left: 1px solid #ccd0e0; padding: 0 4px; }
  .title p { display: flex; align-items: center; gap: 8px; height: 34px; font-size: 19px; font-weight: 600; }
  .title p b { font-size: 24px; }
  .quote-head { display: flex; align-items: center; gap: 14px; height: 30px; padding: 0 7px 0 10px; background: #e9ecf5; font-size: 16px; }
  .quote-head span { margin-right: auto; }
  .quote { display: grid; grid-template-columns: 1fr 1fr 1fr; gap: 0 19px; height: 166px; padding: 1px 6px 0; border-bottom: 1px solid #d3d7e6; overflow: hidden; }
  .quote div { display: flex; justify-content: space-between; height: 28px; line-height: 28px; }
  dt { color: #666; }
  .chart-tabs { display: flex; gap: 1px; height: 32px; padding: 3px 4px 0; border-bottom: 1px solid #e9ecf5; }
  .chart-tabs button { width: 75px; }
  .caption { position: relative; display: flex; gap: 23px; height: 25px; padding-left: 8px; font-size: 15px; white-space: nowrap; }
  .over { position: absolute; right: 4px; top: 4px; display: flex; gap: 12px; color: #555; opacity: 0.9; }
  .plot { width: 100%; font-size: 14px; fill: #222; overflow: visible; }
  .plot .up { fill: #ec0d0d; } .plot .down { fill: #168a3a; }
  .grid path { fill: none; stroke: #ddd; stroke-dasharray: 5 3; }
  .frame { fill: none; stroke: #ddd; }
  .panel { border-top: 1px solid #dfe3ee; height: 145px; }
  .panel:last-of-type { border-bottom: 1px solid #dfe3ee; }
  .legend { display: flex; align-items: center; height: 25px; padding: 0 5px 0 11px; font-size: 15px; white-space: nowrap; }
  .legend .name { padding: 0; color: #555; }
  .items { display: flex; flex: 1; gap: 12px; margin: 0 8px 0 10px; overflow: hidden; }
  .items span { display: flex; align-items: center; gap: 3px; }
  .magenta { color: #f0f; } .red { color: #f83838; } .items .gold { color: #e0861a; } .green { color: #00a828; }
  .tools { display: flex; gap: 12px; color: #555; }

  .ticker { display: flex; gap: 41px; height: 30px; flex: none; padding-left: 14px; border-top: 1px solid #d3d7e6; font-size: 16px; line-height: 29px; white-space: nowrap; overflow: hidden; }
  .ticker .clip { direction: rtl; width: 186px; overflow: hidden; flex: none; }
  .ticker .warn { color: #ff8c0a; }
  footer { display: flex; height: 32px; flex: none; border-top: 1px solid #d3d7e6; border-bottom: 1px solid #ccc; background: repeating-linear-gradient(90deg, #fffff0 0 62px, #fff 62px 78px); }
  .index { display: flex; align-items: center; justify-content: center; gap: 10px; width: 470px; flex: none; font-size: 17px; white-space: nowrap; }
  .index + .index { box-shadow: inset 1px 0 #dde0ea; }
  .index .first { margin-left: -5px; }
  .amber { color: #ff8c0a; font-weight: 600; }
  .ime { display: flex; width: 250px; flex: none; align-items: center; justify-content: space-between; margin: -6px 2px -6px -42px; }
  .ime b { color: #0a6ddb; font-size: 18px; }
</style>
